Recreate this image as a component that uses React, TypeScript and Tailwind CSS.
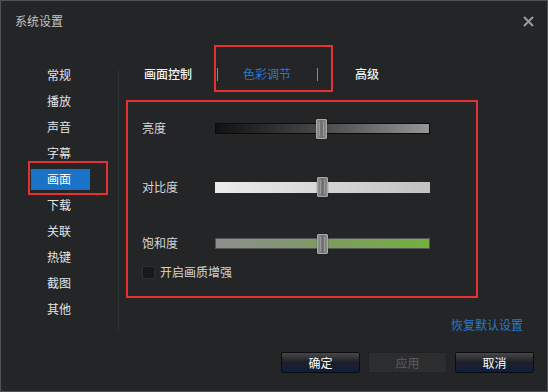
import React from 'react';

const items = ['常规', '播放', '声音', '字幕', '画面', '下载', '关联', '热键', '截图', '其他'];

function Slider({ track, left }: { track: string; left: string }) {
  return (
    <div className={`relative w-[215px] h-[11px] ${track}`}>
      <div className={`absolute ${left} top-[-5px] w-[11px] h-[20px] rounded-[1px] border border-[#a9a9a9] bg-linear-to-r from-[#8e8e8e] via-[#6f6f6f] to-[#8a8a8a] shadow-[0_0_1px_#000]`}>
        <div className="mx-auto mt-[2px] h-[14px] w-[5px] border-x border-[#9a9a9a]" />
      </div>
    </div>
  );
}

export default function App() {
  return (
    <div className="relative w-[548px] h-[392px] overflow-hidden border border-[#505254] bg-[#232527] flex flex-col font-['Noto_Sans_CJK_SC','Noto_Sans',sans-serif] text-[12px] leading-none">
      <div className="h-[40px] shrink-0 flex items-center justify-between pl-[14px] pr-[13px]">
        <span className="text-[#c4c4c4] text-[12px]">系统设置</span>
        <svg width="11" height="11" viewBox="0 0 11 11">
          <path d="M1 1 L10 10 M10 1 L1 10" stroke="#9b9b9b" strokeWidth="2" />
        </svg>
      </div>
      <div className="flex flex-1">
        <div className="w-[117px] shrink-0 pt-[21px] pl-[30px] flex flex-col">
          {items.map((it) => (
            <div key={it} className="h-[26px] flex items-center">
              <span
                className={`w-[59px] h-[21px] flex items-center pl-[16px] ${
                  it === '画面' ? 'bg-[#1b73c8] text-white' : 'text-[#e4e4e4]'
                }`}
              >
                {it}
              </span>
            </div>
          ))}
        </div>
        <div className="w-px h-[262px] mt-[29px] bg-[#2d3034] shrink-0" />
        <div className="flex-1 flex flex-col pl-[23px]">
          <div className="mt-[22px] h-[22px] flex items-center">
            <span className="ml-[2px] text-[#f2f2f2] font-medium">画面控制</span>
            <span className="ml-[25px] w-px h-[13px] bg-[#8a8a8a]" />
            <span className="ml-[25px] text-[#2a79c9]">色彩调节</span>
            <span className="ml-[26px] w-px h-[13px] bg-[#8a8a8a]" />
            <span className="ml-[37px] text-[#f2f2f2] font-medium">高级</span>
          </div>
          <div className="mt-[33px] h-[20px] flex items-center">
            <span className="w-[73px] text-[#d6d6d6]">亮度</span>
            <Slider left="left-[100px]" track="border border-[#0b0b0b] bg-linear-to-r from-[#121212] via-[#4a4a4a] to-[#979797]" />
          </div>
          <div className="mt-[39px] h-[20px] flex items-center">
            <span className="w-[73px] text-[#d6d6d6]">对比度</span>
            <Slider left="left-[102px]" track="bg-linear-to-r from-[#ececec] via-[#d6d6d6] to-[#c2c2c2]" />
          </div>
          <div className="mt-[36px] h-[20px] flex items-center">
            <span className="w-[73px] text-[#d6d6d6]">饱和度</span>
            <Slider left="left-[101px]" track="border border-[#555] bg-linear-to-r from-[#8e8e8e] via-[#7d9a62] to-[#72b03c]" />
          </div>
          <div className="mt-[12px] h-[14px] flex items-center">
            <span className="w-[13px] h-[13px] bg-[#171819] border border-[#2c2e30]" />
            <span className="ml-[5px] text-[#d6d6d6]">开启画质增强</span>
          </div>
          <div className="mt-[38px] h-[16px] flex items-center justify-end pr-[24px]">
            <span className="text-[#2a79c9]">恢复默认设置</span>
          </div>
          <div className="mt-[19px] flex justify-end gap-[8px] pr-[13px]">
            <button className="w-[79px] h-[21px] rounded-[2px] border border-[#0c0c0e] bg-linear-to-b from-[#46484c] via-[#1d1f24] to-[#0e1d42] text-white text-[12px] leading-none">
              确定
            </button>
            <button className="w-[79px] h-[21px] rounded-[2px] border border-[#202224] bg-[#2b2d2f] text-[#5c5e60] text-[12px] leading-none">
              应用
            </button>
            <button className="w-[79px] h-[21px] rounded-[2px] border border-[#0c0c0e] bg-linear-to-b from-[#46484c] via-[#1d1f24] to-[#0e1d42] text-white text-[12px] leading-none">
              取消
            </button>
          </div>
        </div>
      </div>
      <div className="absolute left-[27px] top-[160px] w-[80px] h-[34px] border-2 border-[#e53131]" />
      <div className="absolute left-[213px] top-[44px] w-[119px] h-[47px] border-2 border-[#e53131]" />
      <div className="absolute left-[125px] top-[99px] w-[352px] h-[198px] border-2 border-[#e53131]" />
    </div>
  );
}
